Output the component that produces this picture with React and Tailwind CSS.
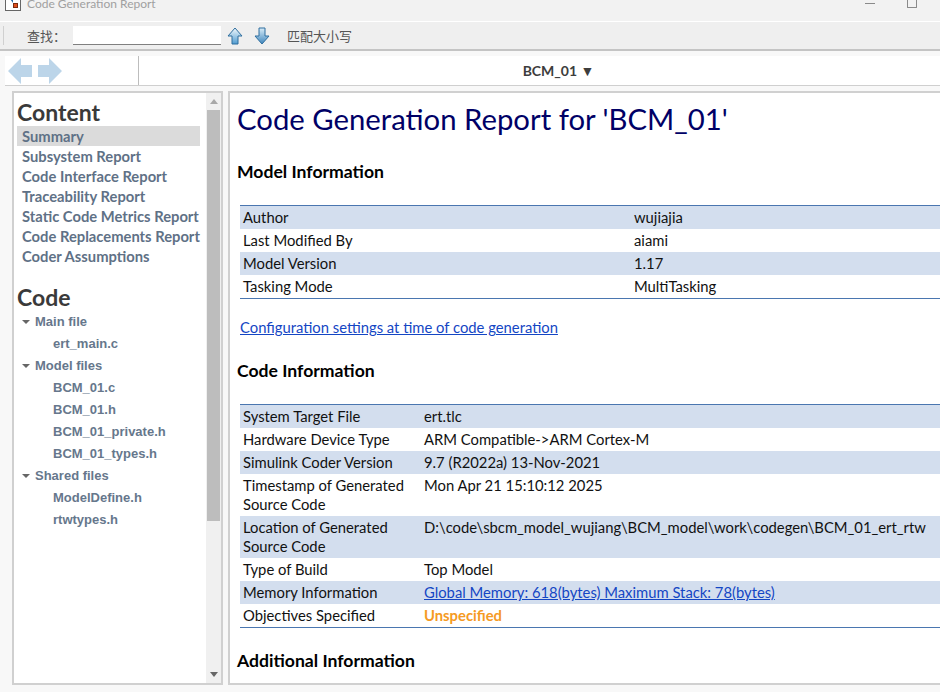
import React from 'react';

const contentLinks = [
  'Summary',
  'Subsystem Report',
  'Code Interface Report',
  'Traceability Report',
  'Static Code Metrics Report',
  'Code Replacements Report',
  'Coder Assumptions',
];

const fileGroups = [
  { name: 'Main file', files: ['ert_main.c'] },
  { name: 'Model files', files: ['BCM_01.c', 'BCM_01.h', 'BCM_01_private.h', 'BCM_01_types.h'] },
  { name: 'Shared files', files: ['ModelDefine.h', 'rtwtypes.h'] },
];

const modelInfo = [
  ['Author', 'wujiajia'],
  ['Last Modified By', 'aiami'],
  ['Model Version', '1.17'],
  ['Tasking Mode', 'MultiTasking'],
];

const codeInfo = [
  ['System Target File', 'ert.tlc'],
  ['Hardware Device Type', 'ARM Compatible->ARM Cortex-M'],
  ['Simulink Coder Version', '9.7 (R2022a) 13-Nov-2021'],
  [<>Timestamp of Generated<br />Source Code</>, 'Mon Apr 21 15:10:12 2025'],
  [<>Location of Generated<br />Source Code</>, 'D:\\code\\sbcm_model_wujiang\\BCM_model\\work\\codegen\\BCM_01_ert_rtw'],
  ['Type of Build', 'Top Model'],
  ['Memory Information', <span className="text-[#1446c4] underline">Global Memory: 618(bytes) Maximum Stack: 78(bytes)</span>],
  ['Objectives Specified', <span className="font-bold text-[#f59a23]">Unspecified</span>],
];

const ArrowUp = ({ flip }) => (
  <svg width="16" height="18" viewBox="0 0 16 18" className={flip ? 'rotate-180' : ''}>
    <defs>
      <linearGradient id={flip ? 'arrowB' : 'arrowA'} x1="0" y1="0" x2="0" y2="1">
        <stop offset="0" stopColor={flip ? '#3f86bd' : '#f4fafd'} />
        <stop offset="1" stopColor={flip ? '#d8ecf8' : '#4f9bd0'} />
      </linearGradient>
    </defs>
    <path d="M8 1 L15 9 H11 V17 H5 V9 H1 Z" fill={`url(#${flip ? 'arrowB' : 'arrowA'})`} stroke="#2f6f9f" strokeWidth="1" />
  </svg>
);

const InfoTable = ({ rows, firstCol }) => (
  <table className="w-[760px] border-y border-[#4a76b0] border-collapse text-[14.8px] leading-[19px] text-[#111]">
    <tbody>
      {rows.map((row, i) => (
        <tr key={i} className={i % 2 === 0 ? 'bg-[#d3deee]' : 'bg-white'}>
          <td className={`${firstCol} px-[3px] py-[2px] align-top`}>{row[0]}</td>
          <td className="px-[3px] py-[2px] align-top whitespace-nowrap">{row[1]}</td>
        </tr>
      ))}
    </tbody>
  </table>
);

export default function App() {
  return (
    <div className="w-[940px] h-[692px] overflow-hidden bg-[#f8f8f8] flex flex-col font-['Lato',sans-serif]">
      {/* title bar */}
      <div className="h-[21px] bg-[#f2f2f2] border-b border-white flex items-center justify-between box-content">
        <div className="flex items-center pl-[5px] -mt-[13px]">
          <svg width="16" height="16" viewBox="0 0 16 16" className="-mt-[2px]">
            <rect x="0.5" y="0.5" width="15" height="15" fill="#fff" stroke="#666" />
            <path d="M3 1 L8 1 L8 8 Z" fill="#2d6ea8" />
            <rect x="8.5" y="8.5" width="4" height="4" fill="#e0501e" stroke="#7a2a10" />
          </svg>
          <span className="ml-[6px] text-[12px] leading-none text-[#a0a0a0]">Code Generation Report</span>
        </div>
        <div className="flex items-start self-start pr-[23px]">
          <div className="w-[10px] h-px bg-[#8a8a8a] mt-[3px] mr-[32px]" />
          <div className="w-[10px] h-[8px] border border-t-0 border-[#8a8a8a] rounded-b-[1px]" />
        </div>
      </div>

      {/* find bar */}
      <div className="h-[29px] bg-[#efefef] border-b-2 border-[#c4c4c4] flex items-center">
        <div className="w-px h-[19px] bg-[#d0d0d0] ml-[3px]" />
        <span className="ml-[23px] w-[46px] text-[13px] text-[#555] font-['Noto_Sans_CJK_SC',sans-serif]">查找：</span>
        <div className="w-[148px] h-[19px] bg-white border-b border-[#808080]" />
        <div className="ml-[6px] flex items-center gap-[11px]">
          <ArrowUp />
          <ArrowUp flip />
        </div>
        <span className="ml-[17px] text-[13px] text-[#555] font-['Noto_Sans_CJK_SC',sans-serif]">匹配大小写</span>
      </div>

      {/* main frame */}
      <div className="mt-[5px] ml-[5px] flex-1 min-h-0 flex flex-col bg-white">
        {/* nav row */}
        <div className="h-[29px] flex border-b border-[#cfcfcf] box-content">
          <div className="w-[134px] border-r border-[#bdbdbd] flex items-center pl-[3px]">
            <svg width="56" height="26" viewBox="0 0 56 26">
              <path d="M0 13 L13 0 V7 H24 V19 H13 V26 Z" fill="#bcd5e9" />
              <path d="M30 7 H41 V0 L54 13 L41 26 V19 H30 Z" fill="#bcd5e9" />
            </svg>
          </div>
          <div className="w-[801px] flex items-center justify-center text-[14px] font-bold text-[#3d3d3d]">
            <span className="ml-[38px]">BCM_01 ▼</span>
          </div>
        </div>

        {/* panes */}
        <div className="bg-[#f8f8f8] pt-[5px] pb-[7px] flex-1 min-h-0 flex pl-[7px] gap-[5px]">
          {/* left pane */}
          <div className="w-[211px] bg-white border-2 border-[#d0d0d0] flex shrink-0">
            <div className="w-[192px] shrink-0 pl-[3px] pt-[6px]">
              <h2 className="text-[23px] leading-[26px] font-bold text-[#3a3a3a]">Content</h2>
              <ul className="mt-[1px] mb-[18px] text-[14.75px] leading-[20px] font-bold text-[#5f7186]">
                {contentLinks.map((link, i) => (
                  <li key={link} className={`pl-[5px] whitespace-nowrap ${i === 0 ? 'bg-[#dbdbdb] w-[183px]' : ''}`}>{link}</li>
                ))}
              </ul>
              <h2 className="text-[23px] leading-[26px] font-bold text-[#3a3a3a]">Code</h2>
              <div className="mt-[1px] font-['Liberation_Sans',sans-serif] text-[13px] leading-[22px] font-bold text-[#66778c]">
                {fileGroups.map(group => (
                  <div key={group.name}>
                    <div className="flex items-center pl-[5px]">
                      <span className="w-0 h-0 border-x-[4px] border-x-transparent border-t-[4px] border-t-[#666] mr-[5px]" />
                      <span>{group.name}</span>
                    </div>
                    {group.files.map(file => (
                      <div key={file} className="pl-[36px]">{file}</div>
                    ))}
                  </div>
                ))}
              </div>
            </div>
            {/* scrollbar */}
            <div className="w-[17px] bg-[#f0f0f0] flex flex-col items-center">
              <div className="h-[17px] flex items-center justify-center">
                <span className="w-0 h-0 border-x-[4px] border-x-transparent border-b-[5px] border-b-[#a8a8a8]" />
              </div>
              <div className="w-[13px] h-[411px] bg-[#bdbdbd]" />
              <div className="flex-1" />
              <div className="h-[17px] flex items-center justify-center">
                <span className="w-0 h-0 border-x-[4px] border-x-transparent border-t-[5px] border-t-[#666]" />
              </div>
            </div>
          </div>

          {/* report pane */}
          <div className="w-[760px] shrink-0 bg-white border-2 border-r-0 border-[#d0d0d0] overflow-hidden pl-[7px]">
            <h1 className="mt-[6px] text-[29.3px] leading-[40px] text-[#000066] whitespace-nowrap">Code Generation Report for 'BCM_01'</h1>
            <h3 className="mt-[22px] text-[17.6px] leading-[22px] font-bold text-black">Model Information</h3>
            <div className="mt-[22px] ml-[3px]">
              <InfoTable rows={modelInfo} firstCol="w-[391px]" />
            </div>
            <div className="mt-[18px] ml-[3px] text-[14.8px] leading-[20px] text-[#1446c4] underline whitespace-nowrap">Configuration settings at time of code generation</div>
            <h3 className="mt-[23px] text-[17.6px] leading-[22px] font-bold text-black">Code Information</h3>
            <div className="mt-[22px] ml-[3px]">
              <InfoTable rows={codeInfo} firstCol="w-[181px]" />
            </div>
            <h3 className="mt-[22px] text-[17.6px] leading-[22px] font-bold text-black">Additional Information</h3>
          </div>
        </div>
      </div>
    </div>
  );
}
